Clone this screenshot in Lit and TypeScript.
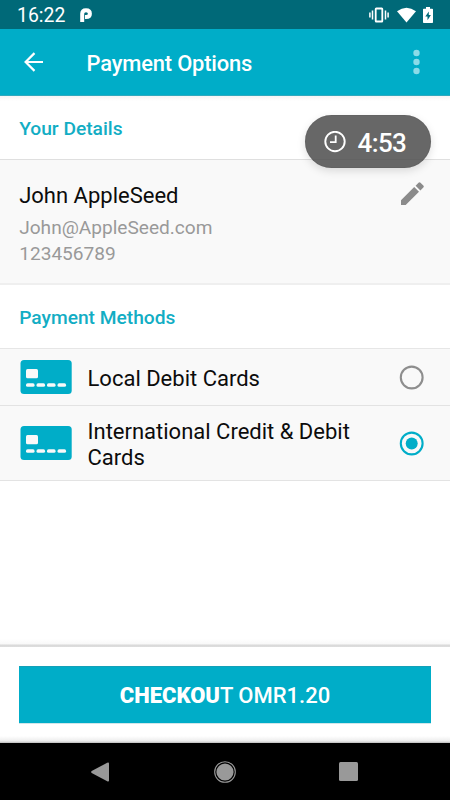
import { LitElement, html, css, svg } from "lit";
import { customElement, state } from "lit/decorators.js";
import { classMap } from "lit/directives/class-map.js";

interface Method {
  id: string;
  lines: string[];
}

@customElement("status-bar")
class StatusBar extends LitElement {
  static styles = css`
    :host {
      display: flex;
      align-items: center;
      height: 29px;
      box-sizing: border-box;
      padding: 0 17px 0 17px;
      background: #006978;
      color: #fff;
    }
    .time {
      font-size: 19.4px;
      line-height: 29px;
      font-weight: 400;
      width: 63px;
      margin-top: 2px;
      white-space: nowrap;
    }
    svg { display: block; }
    .app { margin-top: 1px; }
    .spacer { flex: 1; }
    .wifi { margin-left: 8px; }
    .battery { margin-left: 7px; }
  `;
  render() {
    return html`
      <span class="time">16:22</span>
      <svg class="app" width="12" height="16" viewBox="0 0 12 16">
        <path fill="none" stroke="#fff" stroke-width="4" d="M2.200 15V6.800C2.200 4.500 3.800 3.200 6 3.200s3.900 1.200 3.900 3.500S8.200 10.100 6 10.100H5" />
      </svg>
      <span class="spacer"></span>
      <svg width="20" height="16" viewBox="0 0 20 16">
        <rect x="6.700" y="1.500" width="6.600" height="13" rx=".6" fill="none" stroke="#fff" stroke-width="1.800" />
        <path stroke="#fff" stroke-width="1.500" d="M3.500 3.500v9M16.500 3.500v9M.9 5.500v5M19.100 5.500v5" />
      </svg>
      <svg class="wifi" width="19" height="16" viewBox="0 0 19 16">
        <path fill="#fff" d="M0 4.200Q9.500-2.800 19 4.200L9.500 15.600z" />
      </svg>
      <svg class="battery" width="10" height="16" viewBox="0 0 10 16">
        <path fill="#fff" fill-rule="evenodd" d="M3 0h4v1.700h2.200q.8 0 .8.800v12.700q0 .8-.8.800H.8q-.8 0-.8-.8V2.500q0-.8.8-.8H3zM5.800 4.500L2.300 9.400h2.200v3.900L7.900 8.100H5.800z" />
      </svg>
    `;
  }
}

@customElement("app-bar")
class AppBar extends LitElement {
  static styles = css`
    :host {
      display: flex;
      align-items: center;
      height: 67px;
      box-sizing: border-box;
      padding: 0 30px 0 24px;
      background: #00adc8;
      color: #fff;
      border-bottom: 1px solid #2fa9be;
    }
    svg { display: block; }
    h1 {
      flex: 1;
      margin: 3px 0 0 42.500px;
      font-size: 21.900px;
      line-height: 26px;
      font-weight: 500;
      letter-spacing: -0.16px;
      white-space: nowrap;
    }
  `;
  render() {
    return html`
      <svg width="20" height="20" viewBox="0 0 20 20">
        <path fill="none" stroke="#fff" stroke-width="2.200" d="M19 10H2M10.500 1.100L1.600 10l8.900 8.900" />
      </svg>
      <h1>Payment Options</h1>
      <svg width="7" height="26" viewBox="0 0 7 26">
        <g fill="#8bdbe8">
          <circle cx="3.500" cy="4" r="3.200" />
          <circle cx="3.500" cy="13" r="3.200" />
          <circle cx="3.500" cy="22" r="3.200" />
        </g>
      </svg>
    `;
  }
}

@customElement("countdown-pill")
class CountdownPill extends LitElement {
  static styles = css`
    :host {
      display: flex;
      align-items: center;
      width: 126px;
      height: 53px;
      box-sizing: border-box;
      padding-left: 19px;
      border-radius: 27px;
      background: rgba(80, 80, 80, 0.87);
      box-shadow: 0 3px 9px rgba(0, 0, 0, 0.13), inset 0 0 1px rgba(0, 0, 0, 0.4);
      color: #fff;
    }
    span {
      margin: 2px 0 0 11.500px;
      font-size: 26px;
      line-height: 30px;
      font-weight: 500;
      letter-spacing: -0.6px;
    }
  `;
  render() {
    return html`
      <svg width="22" height="22" viewBox="0 0 22 22">
        <circle cx="11" cy="10.500" r="9.700" fill="none" stroke="#fff" stroke-width="1.900" />
        <path fill="none" stroke="#fff" stroke-width="1.800" d="M11.700 4.500v6.600H6" />
      </svg>
      <span>4:53</span>
    `;
  }
}

@customElement("method-row")
class MethodRow extends LitElement {
  static properties = { lines: { type: Array }, selected: { type: Boolean } };
  declare lines: string[];
  declare selected: boolean;
  static styles = css`
    :host {
      display: flex;
      align-items: center;
      box-sizing: border-box;
      padding: 0 26px 0 20px;
      background: #f9f9f9;
      border-bottom: 1px solid #e3e3e3;
      cursor: pointer;
    }
    svg { display: block; flex: none; }
    .label {
      flex: 1;
      margin: 3px 0 0 15.500px;
      font-size: 22px;
      font-weight: 400;
      line-height: 26px;
      color: #0c0c0c;
      white-space: nowrap;
    }
    .line { display: block; }
    .ring { stroke: #8e8e8e; }
    .ring.on { stroke: #00adc8; }
  `;
  render() {
    return html`
      <svg width="52" height="34" viewBox="0 0 52 34">
        <rect x=".5" width="51.200" height="34" rx="3.500" fill="#00adc8" />
        <g fill="#f9f9f9">
          <rect x="6" y="9" width="12" height="9.300" rx="1.500" />
          <rect x="6" y="23.300" width="8.600" height="3.500" rx="1.600" />
          <rect x="16.500" y="23.300" width="8.600" height="3.500" rx="1.600" />
          <rect x="27" y="23.300" width="8.600" height="3.500" rx="1.600" />
          <rect x="37.500" y="23.300" width="8.600" height="3.500" rx="1.600" />
        </g>
      </svg>
      <div class="label">${this.lines.map((l) => html`<span class="line">${l}</span>`)}</div>
      <svg width="25" height="25" viewBox="0 0 25 25">
        <circle class=${classMap({ ring: true, on: this.selected })} cx="12.700" cy="12.500" r="10.900" fill="none" stroke-width="2.100" />
        ${this.selected ? svg`<circle cx="12.700" cy="12.500" r="6" fill="#00adc8" />` : ""}
      </svg>
    `;
  }
}

@customElement("nav-bar")
class NavBar extends LitElement {
  static styles = css`
    :host {
      display: flex;
      align-items: center;
      justify-content: space-between;
      height: 57px;
      box-sizing: border-box;
      padding: 0 92px 0 91px;
      background: #000;
    }
    svg { display: block; }
    .home { margin-left: 1px; }
  `;
  render() {
    return html`
      <svg width="18" height="20" viewBox="0 0 18 20">
        <path fill="#999" d="M16.200.7Q18 0 18 1.500v17q0 1.500-1.800.8L.7 10.900Q-.4 10 .7 9.100z" />
      </svg>
      <svg class="home" width="22" height="22" viewBox="0 0 22 22">
        <circle cx="11" cy="11" r="10.300" fill="none" stroke="#999" stroke-width="1.100" />
        <circle cx="11" cy="11" r="8.600" fill="#999" />
      </svg>
      <svg width="19" height="19" viewBox="0 0 19 19">
        <rect width="19" height="19" rx="1.500" fill="#999" />
      </svg>
    `;
  }
}

@customElement("app-root")
class AppRoot extends LitElement {
  @state() private selected = "international";

  private methods: Method[] = [
    { id: "local", lines: ["Local Debit Cards"] },
    { id: "international", lines: ["International Credit & Debit", "Cards"] },
  ];

  static styles = css`
    :host {
      display: flex;
      flex-direction: column;
      width: 450px;
      height: 800px;
      overflow: hidden;
      background: #fff;
      font-family: Roboto, "Liberation Sans", sans-serif;
    }
    .content {
      position: relative;
      flex: 1;
      display: flex;
      flex-direction: column;
      background: linear-gradient(#f4f4f4, #fff 5px);
    }
    h2 {
      margin: 0;
      box-sizing: border-box;
      padding-left: 19.200px;
      font-size: 19.200px;
      font-weight: 500;
      color: #12adc4;
      white-space: nowrap;
    }
    .your {
      height: 64px;
      line-height: 66px;
      border-bottom: 1px solid #dfdfdf;
    }
    .pay {
      height: 64px;
      line-height: 66px;
      border-bottom: 1px solid #e6e6e6;
    }
    .details {
      display: flex;
      justify-content: space-between;
      box-sizing: border-box;
      height: 125px;
      padding: 22px 26px 0 19.200px;
      background: #f9f9f9;
      border-bottom: 2px solid #efefef;
      white-space: nowrap;
    }
    .name {
      font-size: 22px;
      font-weight: 400;
      line-height: 27px;
      color: #0c0c0c;
    }
    .sub {
      font-size: 19.100px;
      font-weight: 400;
      line-height: 26px;
      color: #999;
    }
    .email { margin-top: 6px; }
    .edit { display: block; }
    .row-one { height: 57px; }
    .row-two { height: 75px; }
    countdown-pill {
      position: absolute;
      top: 19px;
      right: 19px;
    }
    .footer {
      box-sizing: border-box;
      height: 104px;
      padding: 27px 19px 0;
      background: linear-gradient(#fff 0, #f8f8f8 5px, #d9d9d9 6px, #dedede 8px, #fff 8px, #fff 97px, #ededed 102px, #bbb 104px);
    }
    button {
      display: block;
      width: 100%;
      height: 57px;
      padding: 0;
      border: 0;
      border-top: 1px solid #15a0b7;
      box-shadow: 0 1px 0 #cfe6ea;
      background: #00adc8;
      color: #fff;
      font: 500 22px/58px Roboto, "Liberation Sans", sans-serif;
      white-space: nowrap;
    }
    b { font-weight: 900; }
  `;

  render() {
    return html`
      <status-bar></status-bar>
      <app-bar></app-bar>
      <main class="content">
        <h2 class="your">Your Details</h2>
        <section class="details">
          <div>
            <div class="name">John AppleSeed</div>
            <div class="sub email">John@AppleSeed.com</div>
            <div class="sub phone">123456789</div>
          </div>
          <svg class="edit" width="23" height="23" viewBox="0 0 23 23">
            <path fill="#8b8b8b" d="M0 18.300L13.200 5l4.800 4.800L4.700 23H0zM14.600 3.700L17.500.8q1-1 2 0l2.800 2.800q1 1 0 2l-2.900 2.900z" />
          </svg>
        </section>
        <h2 class="pay">Payment Methods</h2>
        ${this.methods.map(
          (m, i) => html`<method-row
            class=${i ? "row-two" : "row-one"}
            .lines=${m.lines}
            .selected=${m.id === this.selected}
            @click=${() => (this.selected = m.id)}
          ></method-row>`
        )}
        <countdown-pill></countdown-pill>
      </main>
      <footer class="footer">
        <button><b>CHECKOU</b>T OMR1.20</button>
      </footer>
      <nav-bar></nav-bar>
    `;
  }
}
